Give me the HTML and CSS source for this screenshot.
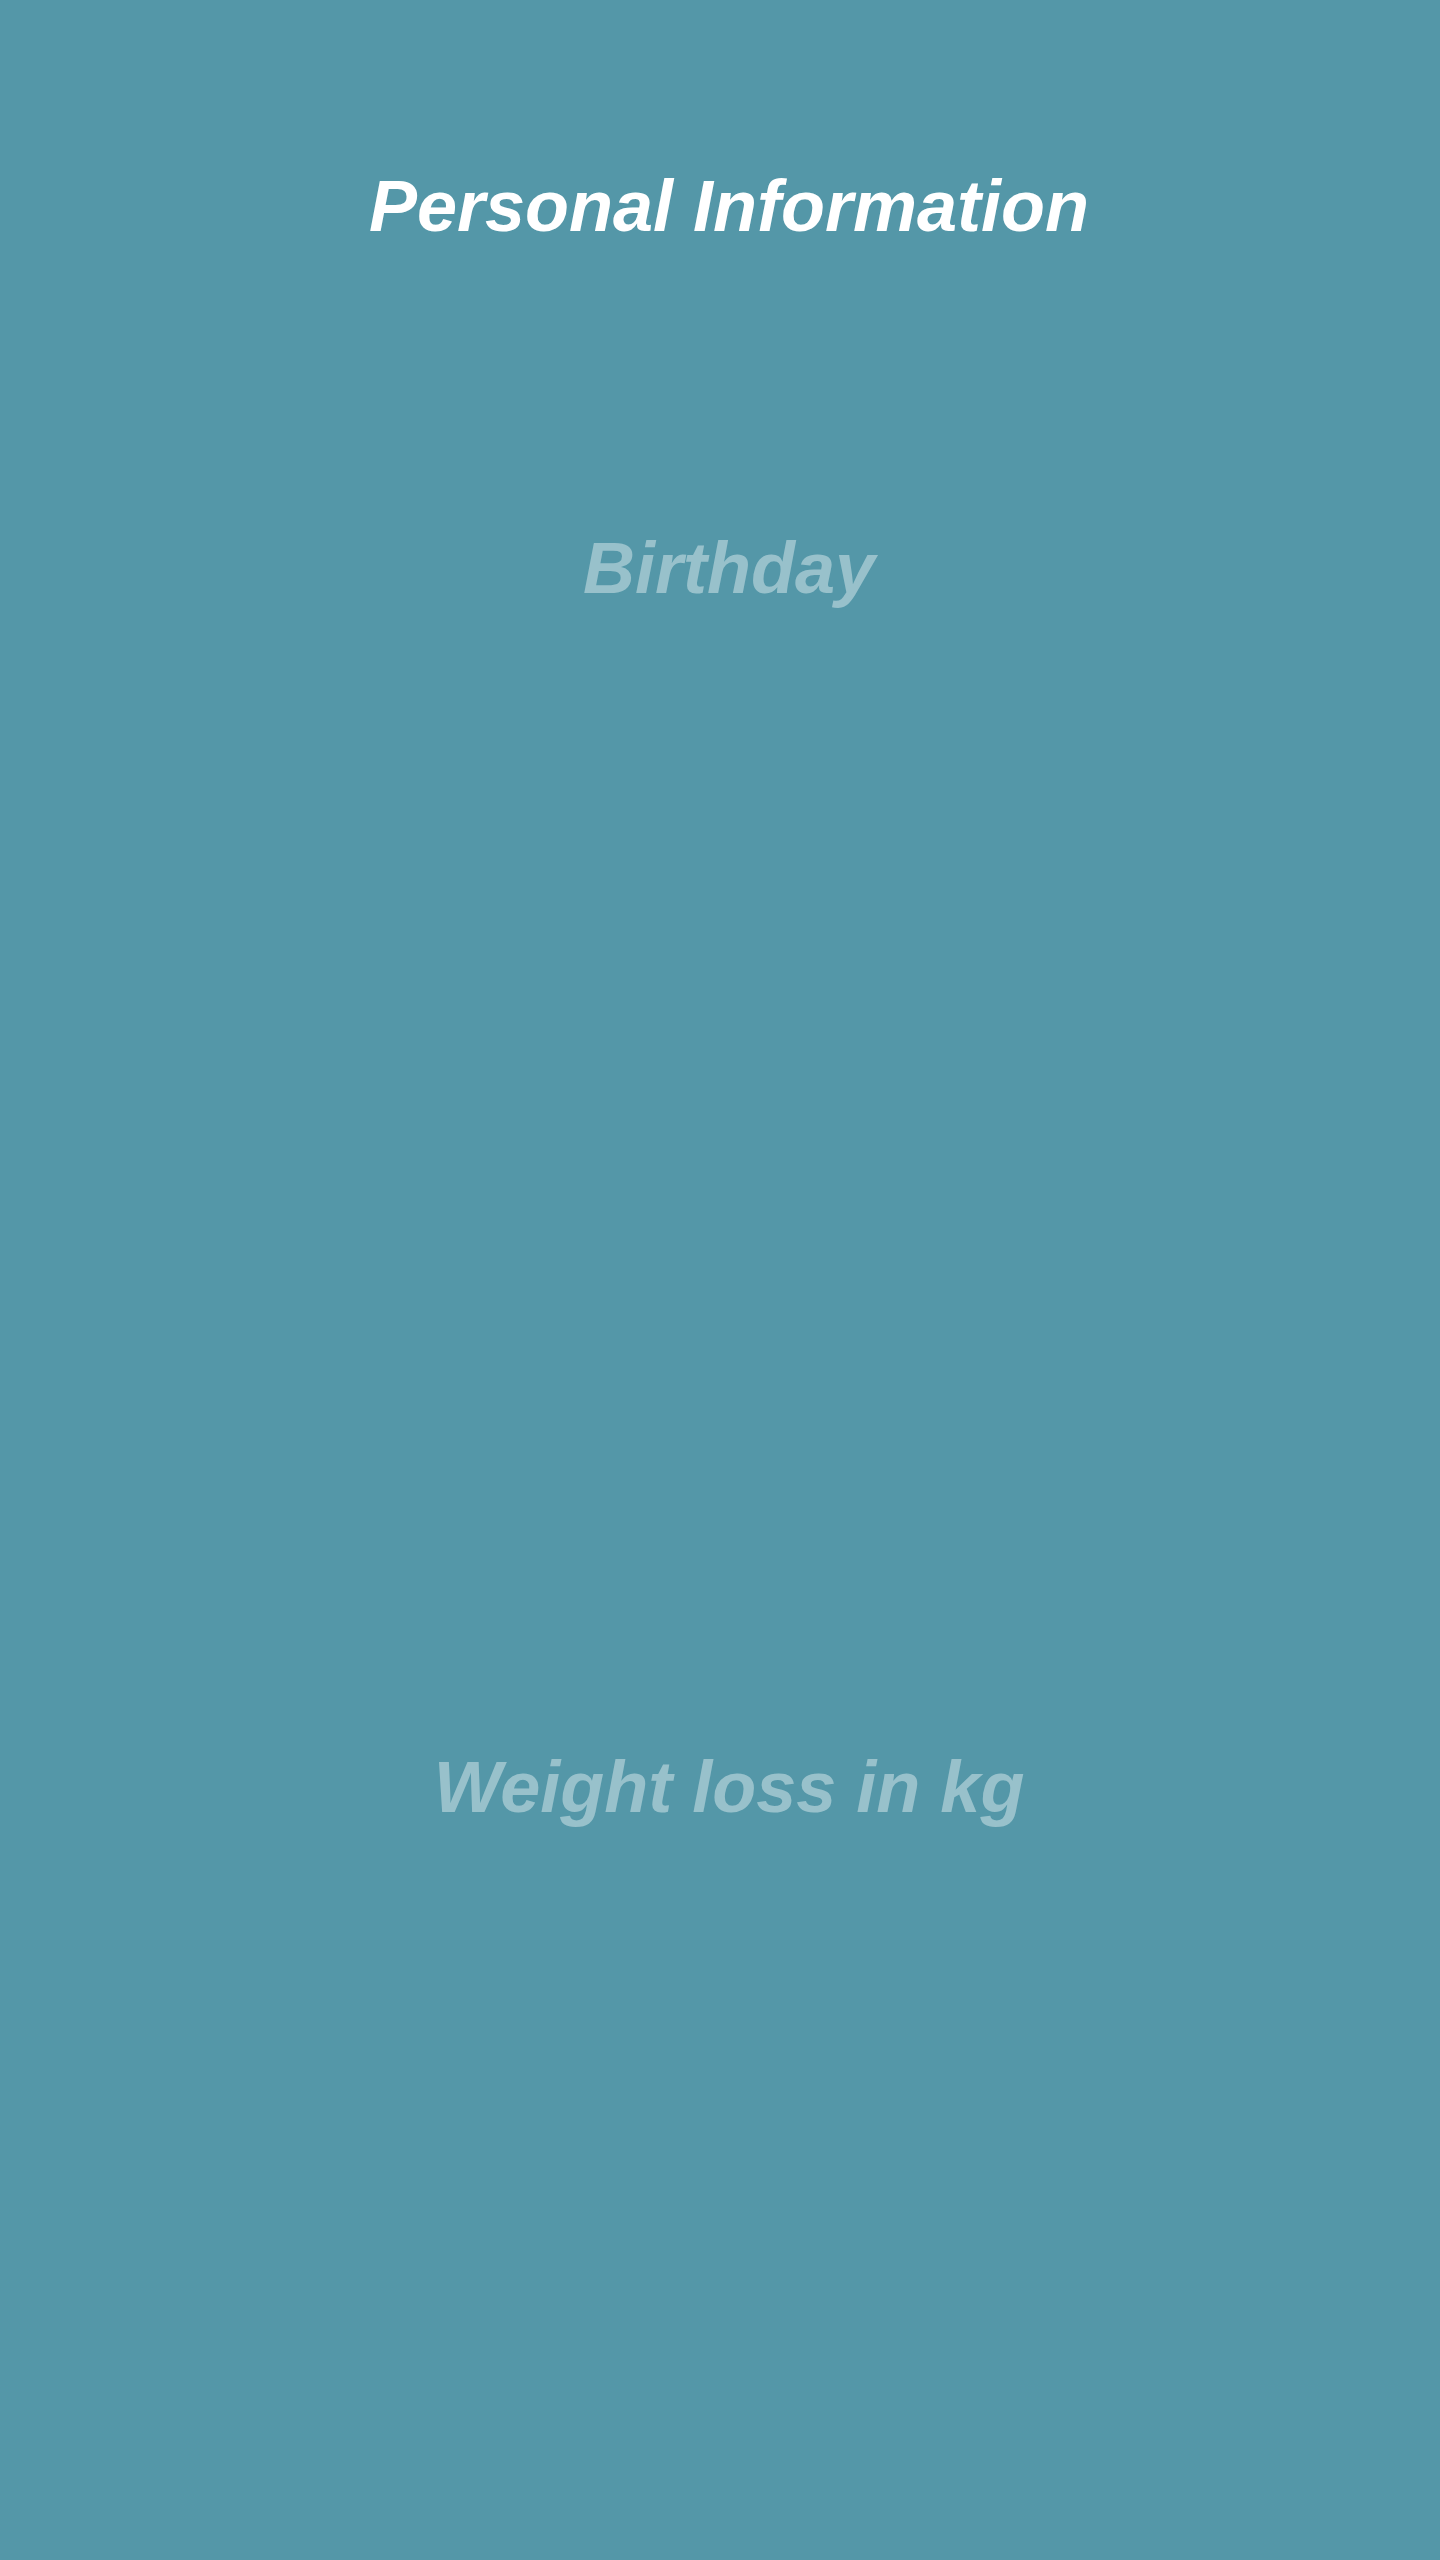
FILE: index.html
```html
<!DOCTYPE html>
<html lang="en">
<head>
<meta charset="utf-8">
<title>Personal Information</title>
<link rel="stylesheet" href="styles.css">
</head>
<body>
<main class="screen">
  <h1 class="title">Personal Information</h1>
  <section class="field field-birthday">
    <h2 class="label">Birthday</h2>
    <div class="picker picker-date"></div>
  </section>
  <section class="field field-weight">
    <h2 class="label">Weight loss in kg</h2>
    <div class="picker picker-weight"></div>
  </section>
</main>
</body>
</html>
```
FILE: styles.css
```css
html, body {
  margin: 0;
  padding: 0;
  background: #5497a8;
}
body {
  font-family: "Liberation Sans", Arial, Helvetica, sans-serif;
}
.screen {
  min-height: 2560px;
  box-sizing: border-box;
  padding-top: 170px;
  padding-left: 18px;
  display: flex;
  flex-direction: column;
  align-items: center;
}
.title {
  margin: 0;
  font-size: 72px;
  line-height: 72px;
  font-weight: 700;
  font-style: italic;
  color: #ffffff;
  text-align: center;
}
.field {
  display: flex;
  flex-direction: column;
  align-items: center;
  width: 100%;
}
.field-birthday {
  margin-top: 290px;
}
.label {
  margin: 0;
  font-size: 72px;
  line-height: 72px;
  font-weight: 700;
  font-style: italic;
  color: #98c1cb;
  text-align: center;
}
.picker-date {
  height: 1147px;
}
.picker-weight {
  height: 600px;
}
```
